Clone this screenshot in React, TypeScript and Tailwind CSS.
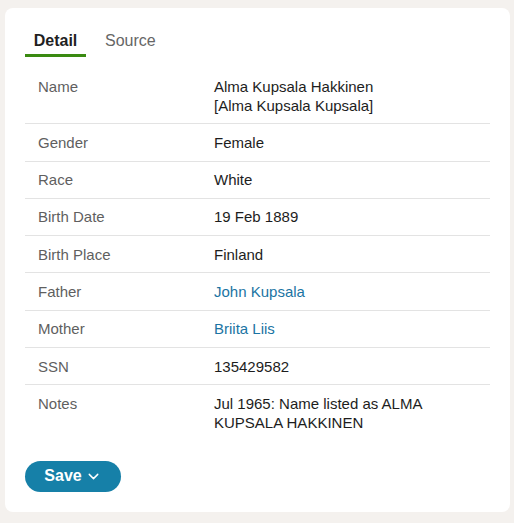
import { ChevronDown } from "lucide-react";

interface Row {
  label: string;
  value: string[];
  link?: boolean;
}

const rows: Row[] = [
  { label: "Name", value: ["Alma Kupsala Hakkinen", "[Alma Kupsala Kupsala]"] },
  { label: "Gender", value: ["Female"] },
  { label: "Race", value: ["White"] },
  { label: "Birth Date", value: ["19 Feb 1889"] },
  { label: "Birth Place", value: ["Finland"] },
  { label: "Father", value: ["John Kupsala"], link: true },
  { label: "Mother", value: ["Briita Liis"], link: true },
  { label: "SSN", value: ["135429582"] },
  { label: "Notes", value: ["Jul 1965: Name listed as ALMA", "KUPSALA HAKKINEN"] },
];

export default function App() {
  return (
    <div className="min-h-[523px] bg-[#f4f1ee] pt-[8px] pl-[5px] font-['Liberation_Sans',Arial,sans-serif]">
      <div className="w-[505px] h-[504px] bg-white rounded-[8px] px-[20px] pt-[23px]">
        {/* Tabs */}
        <div className="flex items-end gap-[10px] text-[16px] leading-[20px]">
          <div className="w-[61px] pb-[3px] border-b-[3px] border-[#3a8a11] text-center font-bold text-[#1f1f1f]">
            Detail
          </div>
          <div className="px-[9px] pb-[6px] text-[#666]">Source</div>
        </div>

        {/* Details */}
        <div className="w-[465px] mt-[11px] text-[15px] leading-[19px]">
          {rows.map((row, i) => (
            <div
              key={row.label}
              className={`grid grid-cols-[189px_1fr] pt-[8.5px] pb-[8.8px] ${
                i < rows.length - 1 ? "border-b border-[#e3e3e3]" : ""
              }`}
            >
              <div className="pl-[13px] text-[#5f5f5f]">{row.label}</div>
              <div className={row.link ? "text-[#1b74a3]" : "text-[#1d1d1d]"}>
                {row.value.map((line) => (
                  <div key={line}>{line}</div>
                ))}
              </div>
            </div>
          ))}
        </div>

        <button className="mt-[20px] w-[96px] h-[31px] rounded-full bg-[#1680a8] text-white font-bold text-[16px] flex items-center justify-center gap-[3px]">
          Save
          <ChevronDown className="w-[17px] h-[17px]" strokeWidth={2} />
        </button>
      </div>
    </div>
  );
}
